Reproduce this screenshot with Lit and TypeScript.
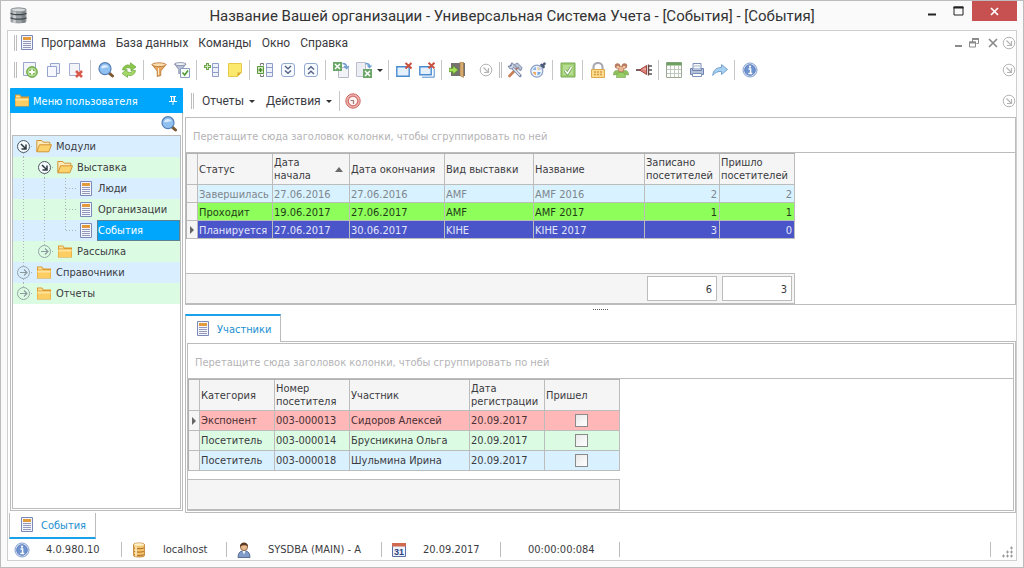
import { LitElement, html, css, svg, nothing, TemplateResult, SVGTemplateResult } from "lit";
import { customElement, state } from "lit/decorators.js";
import { classMap } from "lit/directives/class-map.js";
import { styleMap } from "lit/directives/style-map.js";

const icons: Record<string, SVGTemplateResult> = {
  doc: svg`<path d="M2.5.5h11v14h-11z" fill="#f4f6fd" stroke="#7b88b8"/><path d="M4 2h8v3H4z" fill="#e39a3b"/><path d="M4 6.500h8M4 8.500h8M4 10.500h8M4 12.500h8" stroke="#9499bb"/>`,
  docAdd: svg`<path d="M1.500.5h12v13h-12z" fill="#f3f5fb" stroke="#9aa6cc"/><circle cx="10" cy="10" r="5.400" fill="#86bd58" stroke="#5b9a33" stroke-width=".8"/><circle cx="10" cy="10" r="3.900" fill="none" stroke="#d5ecbf" stroke-width=".8"/><path d="M10 7.200v5.600M7.200 10h5.600" stroke="#fff" stroke-width="1.800"/>`,
  docCopy: svg`<path d="M5.500 1.500h9v10h-9z" fill="#eef1fa" stroke="#97a4cd"/><path d="M2.500 4.500h9v10h-9z" fill="#f6f8fd" stroke="#97a4cd"/>`,
  docDelete: svg`<path d="M1.500 1.500h10v12h-10z" fill="#f3f5fb" stroke="#a5aed0"/><path d="M8 9h7v6H8z" fill="#fff" opacity=".7"/><path d="M8 9l6 6M14 9l-6 6" stroke="#d9584c" stroke-width="2.600"/>`,
  search: svg`<path d="M11 10.800l3.500 3.200" stroke="#7d5a35" stroke-width="3" stroke-linecap="round"/><circle cx="7" cy="6.700" r="6" fill="#8fc0f0" stroke="#5580b8" stroke-width="1.200"/><path d="M3 6a4.200 4 0 0 1 8-.5C8.500 4.300 6 7.200 3 6z" fill="#d9ecff"/>`,
  refresh: svg`<path d="M1.500 8C2 3.500 6.500 2 9.500 3.500L9.500.8 15 5l-5 4V6.500C7 5 4.500 5.500 4.300 8z" fill="#8cc84b" stroke="#6ba53e" stroke-width=".7"/><path d="M14.500 8.500C14 13 9.500 14.500 6.500 13v2.400L1 11.400l5-4.200v2.500c3 1.300 5.300 1 5.600-1.200z" fill="#a5d867" stroke="#6ba53e" stroke-width=".7"/>`,
  funnel: svg`<path d="M1 2.500L6.200 9v5.500l3.600-1V9L15 2.500z" fill="#e8a860" stroke="#b4712c" stroke-width=".8"/><ellipse cx="8" cy="2.700" rx="7" ry="1.900" fill="#fbdcaf" stroke="#b4712c" stroke-width=".8"/><path d="M7.500 6v7" stroke="#fde6c8"/>`,
  funnelCheck: svg`<path d="M.6 2l4.200 5.500v4l2.700-.7V7.500L12 2z" fill="#b9c2d4" stroke="#75809d" stroke-width=".8"/><ellipse cx="6.300" cy="2.100" rx="5.700" ry="1.500" fill="#f1f3f9" stroke="#75809d" stroke-width=".8"/><path d="M6.500 6.500h9v9h-9z" fill="#f6fbf4" stroke="#8b9bc4"/><path d="M8.500 10.500l2.200 2.500 3.300-4.500" fill="none" stroke="#4e9b34" stroke-width="1.600"/>`,
  rowAdd: svg`<path d="M3.500 1v7M0 4.500h7" stroke="#6ca54c" stroke-width="3"/><path d="M3.500 2v5M1 4.500h5" stroke="#cfe8bb"/><path d="M8.500 1.500h6v13h-6zM8.500 5.500h6M8.500 10.500h6" fill="#eef1fa" stroke="#8f9dc9"/>`,
  note: svg`<path d="M1.500 1.500h13v9l-4 4h-9z" fill="#fbe96e" stroke="#e6c84c"/><path d="M14.500 10.500h-4v4z" fill="#dba92f"/>`,
  rowInsert: svg`<path d="M6.500 3.500v-2H3.500v2M3.500 12.500v2h3v-2" fill="none" stroke="#777"/><path d="M.5 4.500h6v7h-6z" fill="#d7ecc6" stroke="#5d9a3e"/><path d="M3.500 6v4M1.500 8h4" stroke="#4a8a2c" stroke-width="1.400"/><path d="M9.500 1.500h6v13h-6zM9.500 5.500h6M9.500 10.500h6" fill="#eef1fa" stroke="#8f9dc9"/>`,
  expandAll: svg`<rect x="1.500" y="1.500" width="13" height="13" rx="2.500" fill="#f7faff" stroke="#93a9cf"/><path d="M5 4l3 2.800L11 4M5 8.500l3 2.800 3-2.800" fill="none" stroke="#566385" stroke-width="1.400"/>`,
  collapseAll: svg`<rect x="1.500" y="1.500" width="13" height="13" rx="2.500" fill="#f7faff" stroke="#93a9cf"/><path d="M5 7.500l3-2.800 3 2.800M5 12l3-2.800 3 2.800" fill="none" stroke="#566385" stroke-width="1.400"/>`,
  excelIn: svg`<path d="M5.500 5.500h10v10h-10z" fill="#f2f3f6" stroke="#b5bac8"/><path d="M0 0h9v9H0z" fill="#6ba769"/><path d="M2 2l5 5M7 2L2 7" stroke="#fff" stroke-width="1.500"/><path d="M9.500 1.500c2.500 0 4 1 4 3.500M11 4l2.500 2.500L16 4" fill="none" stroke="#6a9bd1" stroke-width="1.500"/>`,
  excelOut: svg`<path d="M.5.5h9v14h-9z" fill="#eceef3" stroke="#bcc0cd"/><path d="M9.500 1.500c2.500 0 4 .5 4 2.500M11.500 3.500l2 2 2-2" fill="none" stroke="#6a9bd1" stroke-width="1.300"/><path d="M7 7h9v9H7z" fill="#6ba769"/><path d="M9 9l5 5M14 9l-5 5" stroke="#fff" stroke-width="1.500"/>`,
  windowClose: svg`<path d="M.8 4.800h12.400v9.400H.8z" fill="#e4f0fc" stroke="#4a8bd0" stroke-width="1.400"/><path d="M9.500 1l6 5.500M15.500 1l-6 5.500" stroke="#c9503f" stroke-width="2"/>`,
  windowsClose: svg`<path d="M3 15.200h12.200V7" fill="none" stroke="#4a8bd0"/><path d="M.8 4.800h11.400v8H.8z" fill="#e4f0fc" stroke="#4a8bd0" stroke-width="1.400"/><path d="M9.500.8l6 5.500M15.500.8l-6 5.500" stroke="#c9503f" stroke-width="2"/>`,
  exit: svg`<path d="M2 1h14v13H2z" fill="#75716e"/><path d="M11 0h3.500v15.500L11 13.500z" fill="#d9ab70" stroke="#9a7648" stroke-width=".6"/><path d="M0 6.300h4V3.800L9 8l-5 4.200V9.700H0z" fill="#a9e05a" stroke="#5a9a2c" stroke-width=".8"/>`,
  tools: svg`<path d="M2.500 14L11 5" stroke="#c98059" stroke-width="2.600" stroke-linecap="round"/><path d="M4 4l9 9.500" stroke="#7484a6" stroke-width="3.200" stroke-linecap="round"/><path d="M4 4l9 9.500" stroke="#e3e8f2" stroke-width="1.400"/><path d="M7.500 2.500l3-1.500 4.500 4.500-1 3-2-.5-.5-2.500-2 .5z" fill="#b7c1d5" stroke="#6c7b9d" stroke-width=".8"/><path d="M1 4l1.800.8L5 3 4.200 1 6 1.200 7.500 4 5 7 2.500 6.500z" fill="#d2d9e6" stroke="#6c7b9d" stroke-width=".8"/>`,
  palette: svg`<circle cx="6.800" cy="9.200" r="6" fill="#eef3fb" stroke="#8aa1c9" stroke-width="1.200"/><path d="M6 8H2.800A4.200 4.200 0 0 1 6 5z" fill="#86b2e4"/><path d="M7.500 8V5a4.200 4.200 0 0 1 3.300 3z" fill="#f1c67a"/><path d="M6 10v3.400A4.200 4.200 0 0 1 2.800 10z" fill="#f1ad66"/><path d="M7.500 10h3.300a4.200 4.200 0 0 1-3.300 3.400z" fill="#6ea3dd"/><path d="M9 7.500l4-4" stroke="#c7d2e6" stroke-width="2.200"/><path d="M11.500 3l2 2M13 3.500l1.500-1.800" stroke="#4f5b78" stroke-width="2.600" stroke-linecap="round"/>`,
  check: svg`<path d="M1 1h14v14H1z" fill="#9dcd6e" stroke="#7cab57"/><path d="M3 3h10v10H3z" fill="#b5dc90"/><path d="M5 8.500l2.500 3L11.500 5" fill="none" stroke="#66984a" stroke-width="3"/><path d="M5 8.500l2.500 3L11.500 5" fill="none" stroke="#fff" stroke-width="1.600"/>`,
  lock: svg`<path d="M3.500 8V5a4.500 4 0 0 1 9 0v3" fill="none" stroke="#a9abb3" stroke-width="2.200"/><path d="M1.500 7.500h13v8h-13z" fill="#fbdb8c" stroke="#dda850"/><path d="M4 10h2M7 10h2M10 10h2M4 12.500h2M7 12.500h2M10 12.500h2" stroke="#d79c44" stroke-width="1.400"/>`,
  people: svg`<path d="M.5 13c0-4 2-4.500 4-4.500S8 9 8 12zM15.500 13c0-4-2-4.500-4-4.500S8 9 8 12z" fill="#8fc25f" stroke="#6ea048" stroke-width=".6"/><path d="M3.500 15.500c0-4.500 2-5 4.500-5s4.500.5 4.500 5z" fill="#97cf66" stroke="#6ea048" stroke-width=".6"/><circle cx="4.500" cy="4" r="2.700" fill="#b87a5e"/><circle cx="11.500" cy="4" r="2.700" fill="#b87a5e"/><circle cx="8" cy="7" r="3" fill="#e7b58f" stroke="#b07758" stroke-width=".8"/><circle cx="4.800" cy="5" r="1.300" fill="#f0c7a5"/><circle cx="11.200" cy="5" r="1.300" fill="#f0c7a5"/>`,
  plug: svg`<path d="M0 8h5" stroke="#5b3a3a" stroke-width="1.600"/><path d="M3.500 8L10.500 3.500v9z" fill="#dd8077" stroke="#963a34" stroke-width=".9"/><path d="M7.500 7h2.500" stroke="#f6cfca"/><path d="M12.500 2.500v11" stroke="#6b4444" stroke-width="1.400"/><path d="M13 4h3M13 8h3M13 12h3" stroke="#555" stroke-width="1.300"/>`,
  table: svg`<path d="M.5.500h15v15H.5z" fill="#fff" stroke="#9ba893"/><path d="M.5.5h15v3H.5z" fill="#6ba160"/><path d="M1 7.500h14M1 11.500h14M4.500 4v11M8.500 4v11M12.500 4v11" stroke="#c0c9bd"/>`,
  printer: svg`<path d="M4 1.500h8V7H4z" fill="#f6f8fc" stroke="#7c90b8"/><path d="M1.500 6.500h2v2h9v-2h2v6h-13z" fill="#b4c1da" stroke="#6f84b0"/><path d="M3.500 11.500h9v3h-9z" fill="#fff" stroke="#7c90b8"/><path d="M5 4h6" stroke="#aab7d0"/>`,
  share: svg`<path d="M.8 13.500C1 8 4.500 5.500 9.500 5.500V2.500L15.500 7.500l-6 5V9.500C6 9.200 3 10.500.8 13.500z" fill="#a7d1f2" stroke="#6b9ac6" stroke-width=".9"/>`,
  info: svg`<circle cx="8" cy="8" r="7" fill="#dbe7f7" stroke="#86a0cf" stroke-width="1"/><circle cx="8" cy="8" r="5.300" fill="#6c93cf" stroke="#5f81bd"/><path d="M6.500 7H8.600v4.500M6.300 11.500h4" fill="none" stroke="#fff" stroke-width="1.500"/><circle cx="8" cy="4.700" r="1.100" fill="#fff"/>`,
  stop: svg`<circle cx="8" cy="8" r="7.200" fill="#efb6b3" stroke="#cf6560" stroke-width="1"/><circle cx="8" cy="8" r="4.800" fill="#fbf2f1" stroke="#cf6e69" stroke-width="1.200"/><path d="M5.500 7.500h3v3.500" fill="none" stroke="#9f7c7a" stroke-width="1.200"/>`,
  folder: svg`<path d="M1 1.500h5l1.500 2H15v10H1z" fill="#dd9a2c"/><path d="M2 2.500h3.500l1.500 2H2z" fill="#fbe3a0"/><path d="M1.500 5.500h13v7.500h-13z" fill="#fbcd62"/><path d="M1.500 5.500h13v2h-13z" fill="#fde39b"/>`,
  folderOpen: svg`<path d="M.8 12.500v-11h5l1.500 1.700h6.500v3" fill="#fdeab8" stroke="#d39434"/><path d="M3.500 5.800h12l-2.700 7H.9z" fill="#fbd26b" stroke="#d39434"/>`,
  db: svg`<path d="M2.500 2.500c0-2 11-2 11 0v11c0 2-11 2-11 0z" fill="#f3c46c" stroke="#b9782a" stroke-width=".8"/><ellipse cx="8" cy="2.500" rx="5" ry="1.300" fill="#fdf0cb"/><path d="M3 5.800c1 1.200 9 1.200 10 0M3 9.200c1 1.200 9 1.200 10 0M3 12.500c1 1.200 9 1.200 10 0" fill="none" stroke="#a96820"/><path d="M5 4.500v10" stroke="#fff0cc" stroke-width="1.500"/>`,
  dbGray: svg`<path d="M.5 2.500c0-2.700 15-2.700 15 0v11c0 2.700-15 2.700-15 0z" fill="#9ba0a4"/><path d="M11 1h3.500v14H11z" fill="#62686c" opacity=".55"/><path d="M3 2h2.500v13H3z" fill="#dfe3e5" opacity=".7"/><ellipse cx="8" cy="2.700" rx="7" ry="1.700" fill="#d8dbdd" stroke="#7c8286" stroke-width=".6"/><path d="M.5 5.800c1.500 1.900 13.500 1.900 15 0M.5 10c1.500 1.900 13.500 1.900 15 0" fill="none" stroke="#3f464b" stroke-width="1.100"/>`,
  user: svg`<path d="M2 15.500c0-4 1.500-6 4-6.500h4c2.500.5 4 2.500 4 6.500z" fill="#7f9bc9" stroke="#44587f" stroke-width=".8"/><path d="M6.500 9L8 12.500 9.500 9z" fill="#fff"/><circle cx="8" cy="5" r="3.600" fill="#eab98d" stroke="#6a4628" stroke-width=".7"/><path d="M4 5C3.500-1 12.500-1 12 5c-1-2.500-6-2.500-8 0z" fill="#5c3a22"/>`,
  calendar: svg`<path d="M1.500 1.500h13v13h-13z" fill="#eef2fb" stroke="#5b6ea6"/><path d="M1 1h14v3.500H1z" fill="#d0694f"/><text class="cal" x="8" y="13">31</text>`,
  corner: svg`<circle cx="8" cy="8" r="5.800" fill="#fff" stroke="currentColor" stroke-width="1"/><path d="M5.500 5.500l4.500 4.500M10.500 6v4.500H6" fill="none" stroke="currentColor" stroke-width="1.200"/>`,
  pin: svg`<path d="M3 1.500h6M4.500 1v5M7.500 1v5M2 6.500h8M6 7v3" stroke="#fff" fill="none"/><path d="M6.500 1h1.500v5H6.500z" fill="#fff"/>`,
};

const icon = (name: string, size = 16): TemplateResult =>
  html`<svg class="icon" width=${size} height=${size} viewBox="0 0 16 16" aria-hidden="true">${icons[name]}</svg>`;

type Tool = [string, string] | "sep" | "caret";

const mainTools: Tool[] = [
  ["docAdd", "Добавить"], ["docCopy", "Копировать"], ["docDelete", "Удалить"], "sep",
  ["search", "Поиск"], ["refresh", "Обновить"], "sep",
  ["funnel", "Фильтр"], ["funnelCheck", "Фильтр по значению"], "sep",
  ["rowAdd", "Добавить строку"], ["note", "Примечание"], "sep",
  ["rowInsert", "Вставить строку"], ["expandAll", "Развернуть все"], ["collapseAll", "Свернуть все"], "sep",
  ["excelIn", "Импорт"], ["excelOut", "Экспорт"], "caret", "sep",
  ["windowClose", "Закрыть окно"], ["windowsClose", "Закрыть все окна"], "sep",
  ["exit", "Выход"],
];
const extraTools: Tool[] = [
  ["tools", "Настройки"], ["palette", "Оформление"], "sep",
  ["check", "Проверка"], "sep",
  ["lock", "Блокировка"], ["people", "Пользователи"], ["plug", "Подключение"], "sep",
  ["table", "Таблица"], ["printer", "Печать"], ["share", "Отправить"], "sep",
  ["info", "О программе"],
];

interface TreeRow { guides: string[]; icon: string; label: string; }
const tree: TreeRow[] = [
  { guides: ["open-down"], icon: "folderOpen", label: "Модули" },
  { guides: ["line", "open-down"], icon: "folderOpen", label: "Выставка" },
  { guides: ["line", "line", "tee"], icon: "doc", label: "Люди" },
  { guides: ["line", "line", "tee"], icon: "doc", label: "Организации" },
  { guides: ["line", "line", "end"], icon: "doc", label: "События" },
  { guides: ["line", "closed-up"], icon: "folder", label: "Рассылка" },
  { guides: ["closed-up-down"], icon: "folder", label: "Справочники" },
  { guides: ["closed-up"], icon: "folder", label: "Отчеты" },
];

const guide = (kind: string): TemplateResult => {
  const dots = (d: string) => svg`<path d=${d} stroke="#a9b4b8" stroke-dasharray="1 2" fill="none"/>`;
  const isNode = kind.startsWith("open") || kind.startsWith("closed");
  return html`<svg class="guide" width="21" height="21" viewBox="0 0 21 21" aria-hidden="true">
    ${kind === "line" || kind === "tee" ? dots("M10.500 0V21") : nothing}
    ${kind === "end" ? dots("M10.500 0V11") : nothing}
    ${kind === "tee" || kind === "end" ? dots("M11 10.500H21") : nothing}
    ${kind.includes("up") ? dots("M10.500 0V5") : nothing}
    ${kind.includes("down") ? dots("M10.500 17V21") : nothing}
    ${isNode ? dots("M18 10.500H21") : nothing}
    ${kind.startsWith("open")
      ? svg`<circle cx="10.500" cy="10.500" r="6" fill="#f4faff" stroke="#4c585e"/><path d="M8 8l4.500 4.500M13 8.500V13H8.500" fill="none" stroke="#2f3a40" stroke-width="1.500"/>`
      : nothing}
    ${kind.startsWith("closed")
      ? svg`<circle cx="10.500" cy="10.500" r="6" fill="none" stroke="#93a3a6"/><path d="M7 10.500h6.500M11 7.500l3 3-3 3" fill="none" stroke="#8b9a9d" stroke-width="1.200"/>`
      : nothing}
  </svg>`;
};

interface Column { title: string; width: number; num?: boolean; sort?: boolean; check?: boolean; }
interface Row { tone: string; current?: boolean; cells: string[]; }

const eventColumns: Column[] = [
  { title: "Статус", width: 75 },
  { title: "Дата начала", width: 77, sort: true },
  { title: "Дата окончания", width: 95 },
  { title: "Вид выставки", width: 89 },
  { title: "Название", width: 111 },
  { title: "Записано посетителей", width: 75, num: true },
  { title: "Пришло посетителей", width: 75, num: true },
];
const eventRows: Row[] = [
  { tone: "past", cells: ["Завершилась", "27.06.2016", "27.06.2016", "AMF", "AMF 2016", "2", "2"] },
  { tone: "now", cells: ["Проходит", "19.06.2017", "27.06.2017", "AMF", "AMF 2017", "1", "1"] },
  { tone: "picked", current: true, cells: ["Планируется", "27.06.2017", "30.06.2017", "KIHE", "KIHE 2017", "3", "0"] },
];
const memberColumns: Column[] = [
  { title: "Категория", width: 75 },
  { title: "Номер посетителя", width: 75 },
  { title: "Участник", width: 120 },
  { title: "Дата регистрации", width: 75 },
  { title: "Пришел", width: 75, check: true },
];
const memberRows: Row[] = [
  { tone: "pink", current: true, cells: ["Экспонент", "003-000013", "Сидоров Алексей", "20.09.2017", ""] },
  { tone: "green", cells: ["Посетитель", "003-000014", "Брусникина Ольга", "20.09.2017", ""] },
  { tone: "blue", cells: ["Посетитель", "003-000018", "Шульмина Ирина", "20.09.2017", ""] },
];

@customElement("app-root")
export class AppRoot extends LitElement {
  @state() private selected = "События";

  static styles = css`
    :host {
      display: block;
      font: 11px/13px "DejaVu Sans Condensed", "DejaVu Sans", sans-serif;
      color: #3b3b3f;
      --line: #bcbcbc;
      --accent: #00a6fb;
    }
    * { box-sizing: border-box; }
    button { font: inherit; color: inherit; background: none; border: 0; padding: 0; margin: 0; }
    svg { display: block; flex: none; }
    .window {
      display: flex; flex-direction: column; min-height: 100vh;
      border: 1px solid #bdbbbd; background: #fafafa; padding: 0 6px 6px;
    }
    .titlebar { display: grid; grid-template-columns: 1fr auto 1fr; height: 29px; align-items: start; }
    .appicon { margin: 6px 0 0 3px; }
    .title {
      margin: 0; text-align: center; color: #333;
      font: 15px/30px Roboto, "Open Sans", sans-serif;
    }
    .wincontrols { display: flex; justify-content: flex-end; }
    .wincontrols button { width: 27px; height: 20px; display: grid; place-items: center; }
    .wincontrols .close { width: 45px; background: #c75050; }
    .frame {
      flex: 1; display: flex; flex-direction: column;
      border: 1px solid #cfcfcf; background: #fff; min-width: 0;
    }
    .bar { display: flex; align-items: center; }
    .ui { font: 12px/16px Roboto, "Open Sans", sans-serif; }
    .menubar { height: 24px; padding-left: 6px; }
    .menubar nav { display: flex; gap: 10px; margin-left: 6px; }
    .menubar .icon { margin-left: 1px; }
    .grip { width: 3px; height: 16px; border: solid #bdbdbd; border-width: 0 1px; margin-right: 1px; }
    .push { margin-left: auto; display: flex; align-items: center; }
    .mdi { display: flex; gap: 5px; margin-right: 1px; }
    .round { color: #b5b5b5; }
    .push .round { margin-right: -1px; }
    .toolbar { height: 30px; padding-left: 6px; }
    .tool { width: 23px; height: 23px; display: grid; place-items: center; }
    .sep { width: 1px; height: 20px; background: #c6c6c6; margin: 0 3px; }
    .caret { width: 10px; height: 23px; display: grid; place-items: center; }
    .caret::after, .drop::after {
      content: ""; border: 3px solid transparent; border-top-color: #333; border-bottom: 0;
    }
    .more { margin-left: 10px; margin-right: 5px; }
    .work { flex: 1; display: flex; gap: 2px; padding: 3px 0 0 2px; }
    .side { width: 173px; flex: none; display: flex; flex-direction: column; border: 1px solid var(--line); border-top-color: var(--accent); margin-bottom: 2px; }
    .sidehead {
      display: flex; align-items: center; height: 24px; margin: 0 -1px; padding: 0 4px;
      background: var(--accent); color: #fff; font-weight: normal; font-size: 11px;
    }
    .sidehead span { flex: 1; margin-left: 3px; }
    .sidesearch { display: flex; justify-content: flex-end; height: 22px; align-items: center; padding-right: 5px; }
    .tree { flex: 1; list-style: none; margin: 0 1px 1px; padding: 0; border: 1px solid var(--line); }
    .tree li { height: 21px; background: #d9efff; }
    .tree li:nth-child(even) { background: #dcfbe3; }
    .node { display: flex; align-items: center; width: 100%; height: 21px; text-align: left; }
    .node .icon { margin: 0 3px 0 2px; }
    .node .label { flex: 1; height: 21px; line-height: 22px; padding-left: 1px; }
    .node.on .label { background: var(--accent); color: #fff; border: 1px solid #5e8191; line-height: 20px; padding-left: 0; }
    .main { flex: 1; min-width: 0; display: flex; flex-direction: column; }
    .actions { height: 29px; padding: 0 0 3px 6px; }
    .actions .drop { display: flex; align-items: center; gap: 5px; margin: 0 4px 0 7px; }
    .actions .sep { height: 20px; margin: 0 5px 0 3px; }
    .panel { border: 1px solid var(--line); display: flex; flex-direction: column; }
    .panel.fill { flex: 1; }
    .groupby { height: 35px; line-height: 37px; padding-left: 7px; color: #b4b4b6; border-bottom: 1px solid var(--line); font-size: 11px; }
    .tablebox { width: max-content; flex: 1; display: flex; flex-direction: column; }
    table { table-layout: fixed; border-collapse: separate; border-spacing: 0; border: solid #b2b2b2; border-width: 1px 0 0 1px; width: 0; }
    th, td { border: solid var(--line); border-width: 0 1px 1px 0; text-align: left; font-weight: normal; white-space: nowrap; }
    th { height: 31px; background: #f5f5f5; white-space: normal; padding: 0 0 0 1px; line-height: 13px; }
    td { height: 18px; line-height: 15px; padding: 2px 2px 0 1px; }
    .tall td { height: 20px; padding-top: 0; }
    .box { appearance: none; display: block; margin: 0 auto; width: 13px; height: 13px; border: 1px solid #8a8a8a; background: linear-gradient(135deg, #e9e9e9, #fff); }
    .mark i { display: block; margin-left: 2px; width: 0; border: 4px solid transparent; border-left: 4px solid #666; border-right: 0; }
    .headcell { display: flex; align-items: center; justify-content: space-between; }
    .sort { border: 4px solid transparent; border-bottom: 5px solid #6a6a6a; border-top: 0; margin-right: 6px; }
    td.num { text-align: right; }
    .past td { background: #d9f2ff; color: #7d878c; }
    .now td { background: #8eff5a; color: #1f3d18; }
    .picked td { background: #4a55c9; color: #e2e4fa; }
    .pink td { background: #ffb7b7; color: #4a2f33; }
    .green td { background: #dcfbe3; }
    .blue td { background: #d9f0ff; }
    tr td.mark { background: #f5f5f5; padding-top: 0; }
    .summary { display: flex; justify-content: flex-end; gap: 5px; height: 31px; padding: 2px; background: #f5f5f5; border: 1px solid var(--line); border-left: 0; }
    .summary output { width: 70px; height: 25px; line-height: 25px; border: 1px solid var(--line); background: #fff; text-align: right; padding-right: 4px; }
    .push-down { margin-top: auto; }
    .gap-top { margin-top: 8px; }
    .splitter { height: 9px; display: grid; place-items: center; }
    .splitter::after { content: ""; width: 15px; border-top: 1px dotted #555; }
    .tab {
      display: flex; align-items: center; gap: 6px; color: #1c8fd0; padding: 0 9px;
      border: 1px solid var(--line); background: #fff;
    }
    .tab.top { height: 28px; border-top: 2px solid #1ba0ea; border-bottom: 0; margin-bottom: -1px; align-self: flex-start; position: relative; }
    .tab.bottom { height: 26px; border-top: 0; border-bottom: 2px solid #1ba0ea; }
    .tabpanel { border: 1px solid var(--line); padding: 1px; }
    .tabs { display: flex; padding-left: 1px; }
    .status { height: 21px; padding-left: 6px; font-size: 11px; }
    .status .cell { display: flex; align-items: center; height: 15px; border-right: 1px solid var(--line); }
    .status .icon { margin-right: 16px; }
    .version { width: 108px; }
    .host { width: 105px; padding-left: 9px; }
    .login { width: 155px; padding-left: 9px; }
    .date { width: 119px; padding-left: 9px; }
    .timer { width: 119px; padding-left: 27px; }
    .cal { font: bold 9px "Liberation Sans", sans-serif; fill: #2c3f7c; text-anchor: middle; }
    .sizer { margin: 4px 2px 0 11px; }
  `;

  private tools(list: Tool[]) {
    return list.map((t) =>
      t === "sep" ? html`<span class="sep"></span>`
      : t === "caret" ? html`<button class="caret" aria-label="Варианты экспорта"></button>`
      : html`<button class="tool" aria-label=${t[1]} title=${t[1]}>${icon(t[0])}</button>`);
  }

  private round() {
    return html`<button class="round" aria-label="Настройка панели">${icon("corner")}</button>`;
  }

  private table(columns: Column[], rows: Row[], tall: boolean) {
    return html`<table class=${classMap({ tall })}>
      <colgroup>
        <col style=${styleMap({ width: "11px" })} />
        ${columns.map((c) => html`<col style=${styleMap({ width: `${c.width}px` })} />`)}
      </colgroup>
      <thead>
        <tr>
          <th class="mark"></th>
          ${columns.map((c) => html`<th scope="col">${c.sort
            ? html`<div class="headcell"><span>Дата<br />начала</span><span class="sort"></span></div>`
            : c.title}</th>`)}
        </tr>
      </thead>
      <tbody>
        ${rows.map((r) => html`<tr class=${r.tone}>
          <td class="mark">${r.current ? html`<i></i>` : nothing}</td>
          ${r.cells.map((cell, i) => html`<td class=${classMap({ num: !!columns[i].num })}>
            ${columns[i].check
              ? html`<input type="checkbox" class="box" aria-label=${`Пришел: ${r.cells[2]}`} />`
              : cell}</td>`)}
        </tr>`)}
      </tbody>
    </table>`;
  }

  private groupHint() {
    return html`<div class="groupby">Перетащите сюда заголовок колонки, чтобы сгруппировать по ней</div>`;
  }

  render() {
    return html`
      <div class="window">
        <header class="titlebar">
          <span class="appicon">${icon("dbGray", 17)}</span>
          <h1 class="title">Название Вашей организации - Универсальная Система Учета - [События] - [События]</h1>
          <div class="wincontrols">
            <button aria-label="Свернуть"><svg width="11" height="11"><path d="M2 8.500h8" stroke="#222" stroke-width="2" /></svg></button>
            <button aria-label="Развернуть"><svg width="11" height="10"><path d="M1 1h9v8H1z" fill="none" stroke="#222" /><path d="M.5 1.500h10" stroke="#222" stroke-width="2" /></svg></button>
            <button class="close" aria-label="Закрыть"><svg width="9" height="9"><path d="M1 1l7 7M8 1L1 8" stroke="#fff" stroke-width="1.700" /></svg></button>
          </div>
        </header>

        <div class="frame">
          <div class="bar menubar ui">
            <span class="grip"></span>${icon("doc")}
            <nav>
              ${["Программа", "База данных", "Команды", "Окно", "Справка"].map((m) => html`<button>${m}</button>`)}
            </nav>
            <div class="push">
              <div class="mdi">
                <button aria-label="Свернуть документ"><svg width="10" height="10"><path d="M1 8h7" stroke="#8b8b8b" stroke-width="2" /></svg></button>
                <button aria-label="Восстановить документ"><svg width="11" height="10"><path d="M3.500 4V1h6v4.500H7.500M.5 4h6v5h-6z" fill="none" stroke="#8b8b8b" /><path d="M3 1h7M0 4.500h7" stroke="#8b8b8b" stroke-width="2" /></svg></button>
                <button aria-label="Закрыть документ"><svg width="14" height="10"><path d="M4 1l8 8M12 1L4 9" stroke="#8b8b8b" stroke-width="1.700" /></svg></button>
              </div>
              ${this.round()}
            </div>
          </div>

          <div class="bar toolbar">
            <span class="grip"></span>
            ${this.tools(mainTools)}
            <button class="round more" aria-label="Настройка панели">${icon("corner")}</button>
            <span class="grip"></span>
            ${this.tools(extraTools)}
            <div class="push">${this.round()}</div>
          </div>

          <div class="work">
            <aside class="side">
              <h2 class="sidehead bar">${icon("folder")}<span>Меню пользователя</span>
                <button aria-label="Закрепить"><svg width="12" height="12" viewBox="0 0 12 12">${icons.pin}</svg></button>
              </h2>
              <div class="sidesearch"><button aria-label="Поиск в меню">${icon("search")}</button></div>
              <ul class="tree">
                ${tree.map((row) => html`<li>
                  <button class=${classMap({ node: true, on: row.label === this.selected })}
                    @click=${() => { this.selected = row.label; }}>
                    ${row.guides.map(guide)}${icon(row.icon)}<span class="label">${row.label}</span>
                  </button>
                </li>`)}
              </ul>
            </aside>

            <main class="main">
              <div class="bar actions ui">
                <span class="grip"></span>
                <button class="drop">Отчеты</button>
                <button class="drop">Действия</button>
                <span class="sep"></span>
                <button aria-label="Остановить">${icon("stop")}</button>
                <div class="push">${this.round()}</div>
              </div>

              <section class="panel fill">
                ${this.groupHint()}
                <div class="tablebox">
                  ${this.table(eventColumns, eventRows, false)}
                  <div class="summary push-down">
                    <output>6</output><output>3</output>
                  </div>
                </div>
              </section>

              <div class="splitter"></div>

              <button class="tab top">${icon("doc")}<span>Участники</span></button>
              <div class="tabpanel">
                <section class="panel">
                  ${this.groupHint()}
                  <div class="tablebox">
                    ${this.table(memberColumns, memberRows, true)}
                    <div class="summary gap-top"></div>
                  </div>
                </section>
              </div>
            </main>
          </div>

          <div class="tabs"><button class="tab bottom">${icon("doc")}<span>События</span></button></div>

          <footer class="bar status">
            <span class="cell version">${icon("info")}4.0.980.10</span>
            <span class="cell host">${icon("db")}localhost</span>
            <span class="cell login">${icon("user")}SYSDBA (MAIN) - A</span>
            <span class="cell date">${icon("calendar")}20.09.2017</span>
            <span class="cell timer">00:00:00:084</span>
            <span class="cell push"></span>
            <svg class="sizer" width="12" height="12" aria-hidden="true">
              <path d="M8 2h3M4 6h3M8 6h3M0 10h3M4 10h3M8 10h3M9.500.5v3M5.500 4.500v3M9.500 4.500v3M1.500 8.500v3M5.500 8.500v3M9.500 8.500v3" stroke="#9a9a9a" />
            </svg>
          </footer>
        </div>
      </div>
    `;
  }
}
